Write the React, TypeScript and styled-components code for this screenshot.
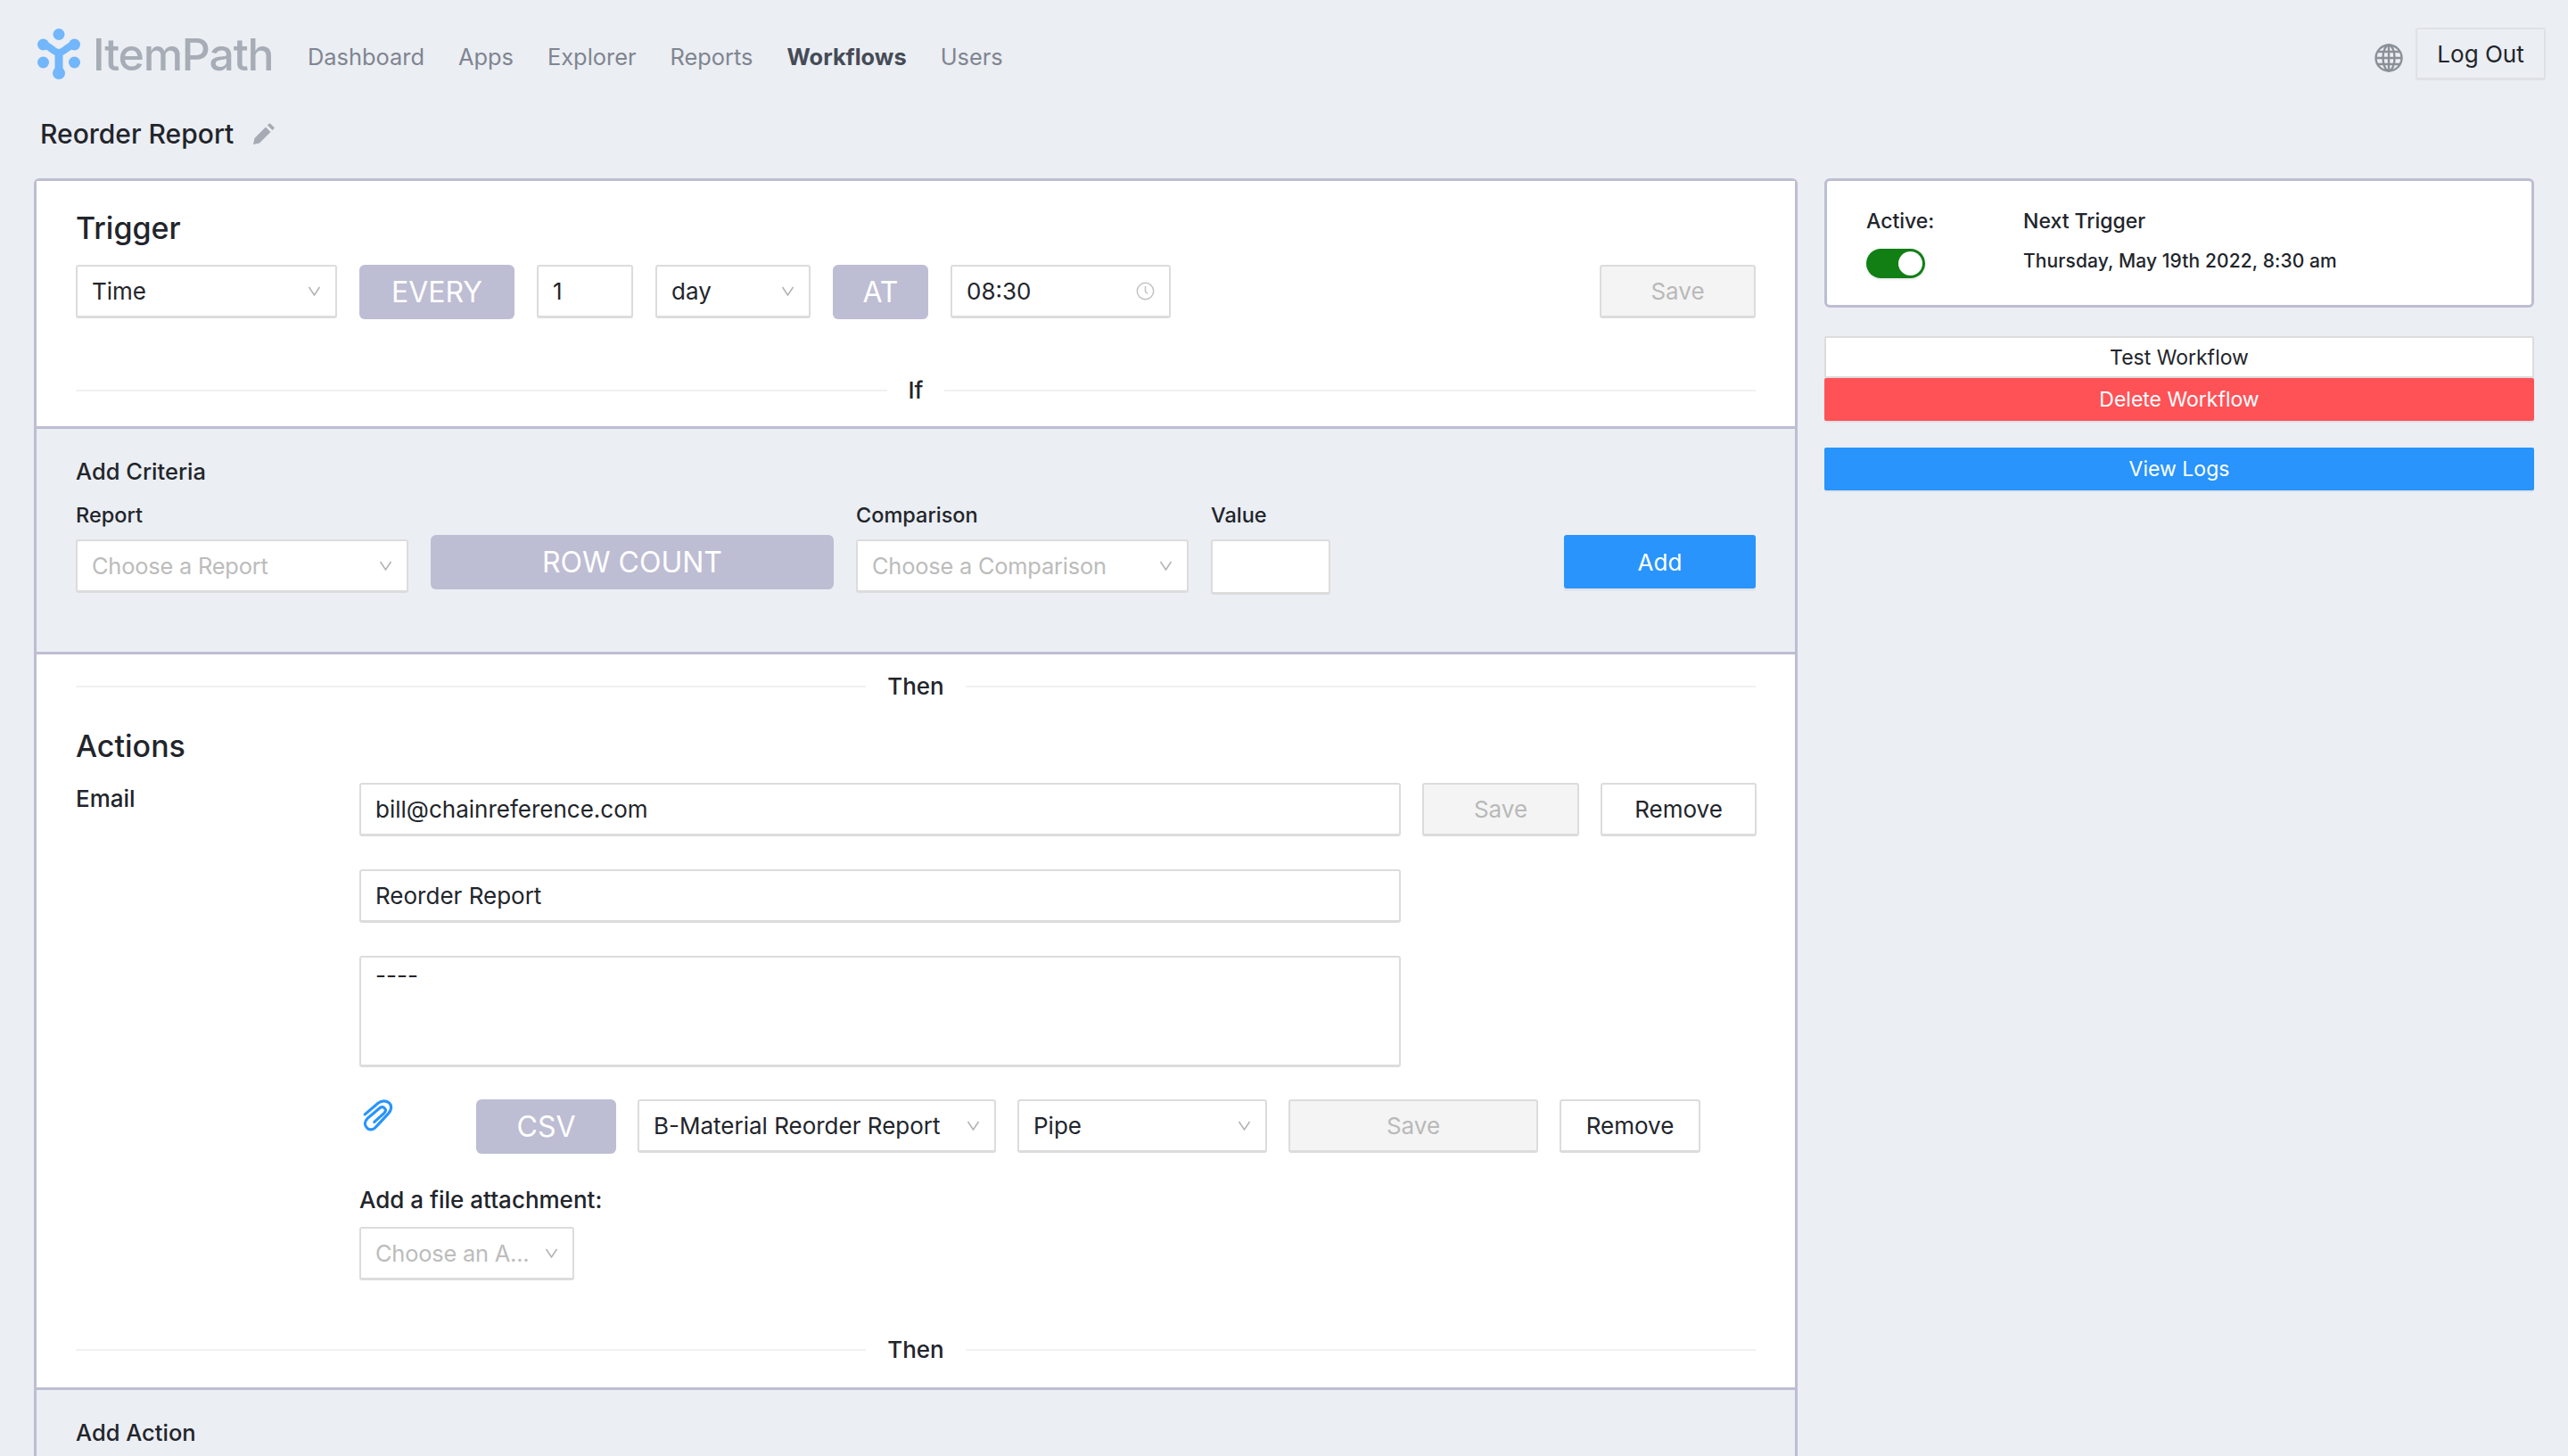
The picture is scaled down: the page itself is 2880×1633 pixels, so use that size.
import React from "react";
import styled, { createGlobalStyle } from "styled-components";

const Global = createGlobalStyle`
  html, body { margin: 0; height: 100%; overflow: hidden; background: #ebeef3; }
  body { font-family: "Inter", "Liberation Sans", sans-serif; color: #22252b; }
  #root { height: 100%; }
  * { box-sizing: border-box; }
`;

const Page = styled.div`
  height: 1633px;
  overflow: hidden;
  padding: 31px 38px 0 38px;
`;
const Header = styled.header`
  display: flex;
  align-items: center;
  height: 59px;
  margin-right: -13px;
`;
const Brand = styled.div`
  display: flex;
  align-items: center;
  gap: 14px;
  width: 303px;
  margin-left: 4px;
  flex: none;
`;
const BrandName = styled.span`
  font-size: 50px;
  font-weight: 500;
  letter-spacing: -1.2px;
  color: #a7adb6;
`;
const Nav = styled.nav`
  display: flex;
  gap: 38px;
  flex: 1;
  padding-top: 5px;
`;
const NavLink = styled.a<{ $active?: boolean }>`
  font-size: 25.4px;
  font-weight: ${(p) => (p.$active ? 700 : 400)};
  color: ${(p) => (p.$active ? "#454b56" : "#7f8590")};
`;
const GlobeSlot = styled.div`
  display: flex;
  padding-top: 8px;
`;
const LogOut = styled.button`
  width: 146px;
  height: 59px;
  margin-left: 14px;
  border: 2px solid #dfe1e5;
  border-bottom-width: 3px;
  border-radius: 3px;
  background: #ebeef3;
  color: #22252b;
  font: 400 26px "Inter", sans-serif;
`;
const TitleRow = styled.div`
  display: flex;
  align-items: center;
  gap: 22px;
  height: 40px;
  margin: 40px 0 30px 7px;
`;
const Title = styled.h1`
  margin: 0;
  font-size: 30px;
  font-weight: 500;
  color: #22252b;
`;
const Columns = styled.div`
  display: flex;
  align-items: flex-start;
  gap: 30px;
`;
const MainCard = styled.main`
  width: 1978px;
  height: 1500px;
  flex: none;
  border: 3px solid #bdbdd3;
  border-bottom: 0;
  border-radius: 6px 6px 0 0;
  background: #fff;
`;
const Section = styled.section<{ $h: number; $gray?: boolean; $pt?: number }>`
  height: ${(p) => p.$h}px;
  padding: ${(p) => p.$pt ?? 0}px 44px 0 44px;
  background: ${(p) => (p.$gray ? "#ebeef3" : "#fff")};
  border-top: ${(p) => (p.$gray ? "3px solid #bdbdd3" : "0")};
  border-bottom: ${(p) => (p.$gray ? "3px solid #bdbdd3" : "0")};
`;
const H2 = styled.h2`
  margin: 0;
  font-size: 34px;
  line-height: 40px;
  font-weight: 500;
  color: #22252b;
`;
const ActionsHeading = styled(H2)`
  margin-top: 31px;
`;
const H3 = styled.h3`
  margin: 0;
  font-size: 25.5px;
  line-height: 32px;
  font-weight: 500;
  color: #22252b;
`;
const Row = styled.div<{ $gap?: number; $mt?: number }>`
  display: flex;
  align-items: flex-start;
  gap: ${(p) => p.$gap ?? 24}px;
  margin-top: ${(p) => p.$mt ?? 0}px;
`;
const Spacer = styled.div`
  flex: 1;
`;
const FieldShell = styled.div<{ $w: number; $h?: number }>`
  flex: none;
  display: flex;
  align-items: center;
  justify-content: space-between;
  width: ${(p) => p.$w}px;
  height: ${(p) => p.$h ?? 60}px;
  padding: 0 16px 0 16px;
  background: #fff;
  border: 2px solid #dcdcdc;
  border-bottom-width: 3px;
  border-radius: 3px;
  font-size: 26px;
  white-space: nowrap;
  color: #22252b;
`;
const Placeholder = styled.span`
  color: #bcbcbc;
  font-size: 25.4px;
  letter-spacing: -0.2px;
`;
const TextArea = styled(FieldShell)`
  align-items: flex-start;
  padding-top: 4px;
`;
const Pill = styled.div<{ $w: number }>`
  flex: none;
  width: ${(p) => p.$w}px;
  height: 61px;
  display: flex;
  align-items: center;
  justify-content: center;
  border-radius: 6px;
  background: #bdbdd3;
  color: #fff;
  font-size: 32px;
  font-weight: 400;
`;
const Btn = styled.button<{ $w: number; $kind?: "muted" | "blue" | "plain" }>`
  flex: none;
  width: ${(p) => p.$w}px;
  height: 60px;
  border-radius: 3px;
  font: 400 26px "Inter", sans-serif;
  padding: 0;
  ${(p) =>
    p.$kind === "blue"
      ? "background:#2894fc;color:#fff;border:0;box-shadow:0 3px 0 #e0e3e8;"
      : p.$kind === "muted"
        ? "background:#f4f4f4;color:#b9b9b9;border:2px solid #dcdcdc;border-bottom-width:3px;"
        : "background:#fff;color:#22252b;border:2px solid #dcdcdc;border-bottom-width:3px;"}
`;
const Divider = styled.div<{ $mt: number }>`
  display: flex;
  align-items: center;
  gap: 24px;
  margin-top: ${(p) => p.$mt}px;
  font-size: 26px;
  font-weight: 500;
  line-height: 32px;
  &::before, &::after {
    content: "";
    flex: 1;
    height: 2px;
    background: #f1f1f1;
  }
`;
const FieldLabel = styled.div`
  font-size: 23.5px;
  line-height: 30px;
  font-weight: 500;
  margin-bottom: 12px;
`;
const Col = styled.div<{ $pt?: number }>`
  flex: none;
  padding-top: ${(p) => p.$pt ?? 0}px;
`;
const EmailLayout = styled.div`
  display: flex;
  margin-top: 21px;
`;
const EmailLabel = styled.div`
  width: 318px;
  flex: none;
  padding-top: 2px;
  font-size: 26px;
  font-weight: 500;
  line-height: 32px;
`;
const EmailBody = styled.div`
  flex: 1;
  min-width: 0;
`;
const ClipSlot = styled.div`
  width: 107px;
  flex: none;
  padding: 0 0 0 4px;
`;
const AttachLabel = styled.div`
  margin: 36px 0 14px;
  font-size: 26px;
  font-weight: 500;
  line-height: 32px;
`;
const Side = styled.aside`
  flex: 1;
  min-width: 0;
`;
const StatusCard = styled.div`
  height: 145px;
  border: 3px solid #bdbdd3;
  border-radius: 6px;
  background: #fff;
  padding: 27px 44px 0;
  display: grid;
  grid-template-columns: 176px 1fr;
  grid-template-rows: 36px 40px;
  row-gap: 9px;
  align-items: center;
`;
const StatusHead = styled.div`
  font-size: 23px;
  font-weight: 500;
`;
const StatusValue = styled.div`
  font-size: 21px;
  font-weight: 500;
  letter-spacing: 0.1px;
  padding-bottom: 6px;
`;
const Toggle = styled.div`
  display: flex;
  justify-content: flex-end;
  align-items: center;
  width: 66px;
  height: 33px;
  padding-right: 3px;
  border-radius: 17px;
  background: #117f14;
  box-shadow: 0 1px 3px rgba(0, 0, 0, 0.15);
  &::after {
    content: "";
    width: 27px;
    height: 27px;
    border-radius: 50%;
    background: #fff;
  }
`;
const SideBtn = styled.button<{ $bg: string; $fg: string; $mt: number }>`
  display: block;
  width: 100%;
  height: ${(p) => (p.$bg === "#fff" ? 47 : 48)}px;
  margin-top: ${(p) => p.$mt}px;
  background: ${(p) => p.$bg};
  color: ${(p) => p.$fg};
  border: ${(p) => (p.$bg === "#fff" ? "2px solid #dcdcdc" : "0")};
  border-radius: 2px;
  font: 400 23px "Inter", sans-serif;
  box-shadow: ${(p) => (p.$bg === "#fff" ? "none" : "0 2px 0 #e0e3e8")};
`;

const Chevron = () => (
  <svg width="15" height="11" viewBox="0 0 15 11" fill="none" stroke="#b4b4b4" strokeWidth="1.6">
    <path d="M1.5 1 L7.5 10 L13.5 1" />
  </svg>
);

const Logo = () => (
  <svg width="48" height="57" viewBox="0 0 48 57" fill="#72b6fb" stroke="none">
    <circle cx="24" cy="6.5" r="6.5" />
    <circle cx="6.5" cy="18" r="6.5" />
    <circle cx="41.5" cy="18" r="6.5" />
    <circle cx="6.5" cy="38" r="6.5" />
    <circle cx="41.5" cy="38" r="6.5" />
    <circle cx="24" cy="50" r="7" />
    <path d="M6.5 18 C14 19 18 27 24 27 C30 27 34 19 41.5 18" fill="none" stroke="#72b6fb" strokeWidth="8" />
    <path d="M24 27 V50" fill="none" stroke="#72b6fb" strokeWidth="9" />
  </svg>
);
const Pencil = () => (
  <svg width="24" height="24" viewBox="0 0 24 24" fill="#a5aab3">
    <path d="M0 24 L1.5 17 L14 4.5 L19.5 10 L7 22.5 Z" />
    <path d="M16 2.5 L18 .5 Q18.5 0 19 .5 L23.5 5 Q24 5.5 23.5 6 L21.5 8 Z" />
  </svg>
);
const Globe = () => (
  <svg width="32" height="32" viewBox="0 0 32 32" fill="none" stroke="#8b9097" strokeWidth="2.4">
    <circle cx="16" cy="16" r="14.5" />
    <ellipse cx="16" cy="16" rx="6.5" ry="14.5" />
    <path d="M16 1.5 V30.5 M1.5 16 H30.5 M3.5 9 H28.5 M3.5 23 H28.5" />
  </svg>
);
const Clock = () => (
  <svg width="21" height="21" viewBox="0 0 21 21" fill="none" stroke="#c2c2c2" strokeWidth="1.5">
    <circle cx="10.5" cy="10.5" r="9.2" />
    <path d="M10.5 5 V11 L13 13.5" />
  </svg>
);
const Clip = () => (
  <svg width="34" height="38" viewBox="0 0 32 36" fill="none" stroke="#2894fc" strokeWidth="3" strokeLinecap="round">
    <path d="M2 16 L16 4 C20 1 25 1 28 4 C31 7 30 12 27 15 L14 29 C11 33 6 33 4 30 C1 27 2 23 5 20 L18 9 C20 7.5 22 8 23 9.5 C24.5 11 24 13 22.5 14.5 L12 24" />
  </svg>
);

export default function App() {
  return (
    <Page>
      <Global />
      <Header>
        <Brand>
          <Logo />
          <BrandName>ItemPath</BrandName>
        </Brand>
        <Nav>
          <NavLink>Dashboard</NavLink>
          <NavLink>Apps</NavLink>
          <NavLink>Explorer</NavLink>
          <NavLink>Reports</NavLink>
          <NavLink $active>Workflows</NavLink>
          <NavLink>Users</NavLink>
        </Nav>
        <GlobeSlot><Globe /></GlobeSlot>
        <LogOut>Log Out</LogOut>
      </Header>
      <TitleRow>
        <Title>Reorder Report</Title>
        <Pencil />
      </TitleRow>
      <Columns>
        <MainCard>
          <Section $h={275} $pt={33}>
            <H2>Trigger</H2>
            <Row $mt={21} $gap={25}>
              <FieldShell $w={293}>Time<Chevron /></FieldShell>
              <Pill $w={174}>EVERY</Pill>
              <FieldShell $w={108}>1</FieldShell>
              <FieldShell $w={174}>day<Chevron /></FieldShell>
              <Pill $w={107}>AT</Pill>
              <FieldShell $w={247}>08:30<Clock /></FieldShell>
              <Spacer />
              <Btn $w={175} $kind="muted">Save</Btn>
            </Row>
            <Divider $mt={64}>If</Divider>
          </Section>
          <Section $h={256} $gray $pt={32}>
            <H3>Add Criteria</H3>
            <Row $mt={18} $gap={25}>
              <Col>
                <FieldLabel>Report</FieldLabel>
                <FieldShell $w={373}><Placeholder>Choose a Report</Placeholder><Chevron /></FieldShell>
              </Col>
              <Col $pt={37}>
                <Pill $w={452}>ROW COUNT</Pill>
              </Col>
              <Col>
                <FieldLabel>Comparison</FieldLabel>
                <FieldShell $w={373}><Placeholder>Choose a Comparison</Placeholder><Chevron /></FieldShell>
              </Col>
              <Col>
                <FieldLabel>Value</FieldLabel>
                <FieldShell $w={134} $h={62} />
              </Col>
              <Spacer />
              <Col $pt={37}>
                <Btn $w={215} $kind="blue">Add</Btn>
              </Col>
            </Row>
          </Section>
          <Section $h={802}>
            <Divider $mt={20}>Then</Divider>
            <ActionsHeading>Actions</ActionsHeading>
            <EmailLayout>
              <EmailLabel>Email</EmailLabel>
              <EmailBody>
                <Row>
                  <FieldShell $w={1168}>bill@chainreference.com</FieldShell>
                  <Btn $w={176} $kind="muted">Save</Btn>
                  <Btn $w={175}>Remove</Btn>
                </Row>
                <Row $mt={37}>
                  <FieldShell $w={1168}>Reorder Report</FieldShell>
                </Row>
                <Row $mt={37}>
                  <TextArea $w={1168} $h={125}>----</TextArea>
                </Row>
                <Row $mt={36}>
                  <ClipSlot><Clip /></ClipSlot>
                  <Pill $w={157}>CSV</Pill>
                  <FieldShell $w={402}>B-Material Reorder Report<Chevron /></FieldShell>
                  <FieldShell $w={280}>Pipe<Chevron /></FieldShell>
                  <Btn $w={280} $kind="muted">Save</Btn>
                  <Btn $w={158}>Remove</Btn>
                </Row>
                <AttachLabel>Add a file attachment:</AttachLabel>
                <FieldShell $w={241}><Placeholder>Choose an A...</Placeholder><Chevron /></FieldShell>
              </EmailBody>
            </EmailLayout>
            <Divider $mt={62}>Then</Divider>
          </Section>
          <Section $h={200} $gray $pt={32}>
            <H3>Add Action</H3>
          </Section>
        </MainCard>
        <Side>
          <StatusCard>
            <StatusHead>Active:</StatusHead>
            <StatusHead>Next Trigger</StatusHead>
            <Toggle />
            <StatusValue>Thursday, May 19th 2022, 8:30 am</StatusValue>
          </StatusCard>
          <SideBtn $bg="#fff" $fg="#22252b" $mt={32}>Test Workflow</SideBtn>
          <SideBtn $bg="#ff5257" $fg="#fff" $mt={0}>Delete Workflow</SideBtn>
          <SideBtn $bg="#2894fc" $fg="#fff" $mt={30}>View Logs</SideBtn>
        </Side>
      </Columns>
    </Page>
  );
}
